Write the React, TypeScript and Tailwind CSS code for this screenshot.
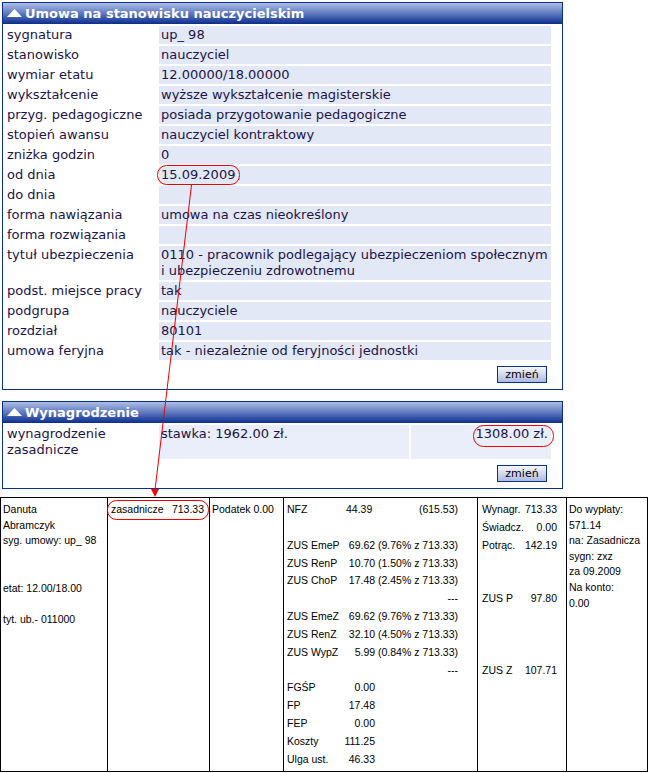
import React from 'react';

type Row = { label: string; value?: string };

const umowaRows: Row[] = [
  { label: 'sygnatura', value: 'up_ 98' },
  { label: 'stanowisko', value: 'nauczyciel' },
  { label: 'wymiar etatu', value: '12.00000/18.00000' },
  { label: 'wykształcenie', value: 'wyższe wykształcenie magisterskie' },
  { label: 'przyg. pedagogiczne', value: 'posiada przygotowanie pedagogiczne' },
  { label: 'stopień awansu', value: 'nauczyciel kontraktowy' },
  { label: 'zniżka godzin', value: '0' },
  { label: 'od dnia', value: '15.09.2009' },
  { label: 'do dnia' },
  { label: 'forma nawiązania', value: 'umowa na czas nieokreślony' },
  { label: 'forma rozwiązania' },
  {
    label: 'tytuł ubezpieczenia',
    value: '0110 - pracownik podlegający ubezpieczeniom społecznym i ubezpieczeniu zdrowotnemu',
  },
  { label: 'podst. miejsce pracy', value: 'tak' },
  { label: 'podgrupa', value: 'nauczyciele' },
  { label: 'rozdział', value: '80101' },
  { label: 'umowa feryjna', value: 'tak - niezależnie od feryjności jednostki' },
];

function PanelHeader({ title }: { title: string }) {
  return (
    <div className="h-[21px] flex items-center gap-[3px] pl-[4px] bg-gradient-to-b from-[#b0bee6] via-[#5f78c0] to-[#0b2c8c] text-white font-bold text-[13px] leading-none">
      <svg width="15" height="8" viewBox="0 0 15 8" className="mb-[1px]">
        <polygon points="0,8 7.5,0 15,8" fill="#ffffff" />
      </svg>
      <span>{title}</span>
    </div>
  );
}

function ZmienButton() {
  return (
    <button className="w-[50px] h-[17px] border border-[#0b2d8c] bg-gradient-to-b from-[#f6f7fc] to-[#aeb9de] text-[11px] leading-none text-black flex items-center justify-center">
      zmień
    </button>
  );
}

function Zus({ label, value }: { label: string; value: string }) {
  return (
    <div className="flex justify-between w-[171px]">
      <span>{label}</span>
      <span>{value}</span>
    </div>
  );
}

function Fund({ label, value }: { label: string; value: string }) {
  return (
    <div className="flex justify-between w-[88px]">
      <span>{label}</span>
      <span>{value}</span>
    </div>
  );
}

function Sum({ label, value }: { label: string; value: string }) {
  return (
    <div className="flex justify-between">
      <span>{label}</span>
      <span>{value}</span>
    </div>
  );
}

export default function App() {
  return (
    <div
      className="relative w-[649px] h-[773px] bg-white overflow-hidden"
      style={{ fontFamily: '"DejaVu Sans", Verdana, sans-serif' }}
    >
      <div className="pt-[2px] pl-[2px] flex flex-col">
        {/* Umowa */}
        <div className="w-[561px] border border-[#0b2d8c] bg-white">
          <PanelHeader title="Umowa na stanowisku nauczycielskim" />
          <div className="pt-[2px] pl-[2px] flex flex-col gap-[2px] text-[13px] leading-[16px] text-[#1b1448]">
            {umowaRows.map((r) => (
              <div key={r.label} className="flex">
                <div className="w-[154px] px-[2px] py-[1px]">{r.label}</div>
                <div className="w-[392px] px-[2px] py-[1px] bg-[#e3e8f6]">{r.value ?? '\u00a0'}</div>
              </div>
            ))}
          </div>
          <div className="flex justify-end pr-[15px] pt-[6px] pb-[6px]">
            <ZmienButton />
          </div>
        </div>

        {/* Wynagrodzenie */}
        <div className="mt-[11px] w-[561px] border border-[#0b2d8c] bg-white">
          <PanelHeader title="Wynagrodzenie" />
          <div className="pt-[2px] pl-[2px] flex text-[13px] leading-[16px] text-[#1b1448]">
            <div className="w-[154px] px-[2px] py-[1px]">
              wynagrodzenie
              <br />
              zasadnicze
            </div>
            <div className="w-[250px] h-[34px] px-[2px] py-[1px] bg-[#e9eefa]">stawka: 1962.00 zł.</div>
            <div className="ml-[2px] w-[140px] h-[34px] px-[3px] py-[1px] bg-[#e9eefa] text-right">1308.00 zł.</div>
          </div>
          <div className="flex justify-end pr-[15px] pt-[6px] pb-[6px]">
            <ZmienButton />
          </div>
        </div>
      </div>

      {/* Pasek wypłaty */}
      <div
        className="mt-[8px] w-[648px] h-[275px] border border-black flex text-[10.5px] text-black"
        style={{ fontFamily: '"Liberation Sans", Arial, sans-serif' }}
      >
        <div className="w-[106px] pl-[2px] pt-[4px] leading-[15.7px]">
          Danuta
          <br />
          Abramczyk
          <br />
          syg. umowy: up_ 98
          <br />
          <br />
          <br />
          etat: 12.00/18.00
          <br />
          <br />
          tyt. ub.- 011000
        </div>
        <div className="w-[102px] border-l border-black pl-[3px] pr-[5px] pt-[4px] leading-[15.7px]">
          <div className="flex justify-between">
            <span>zasadnicze</span>
            <span>713.33</span>
          </div>
        </div>
        <div className="w-[74px] border-l border-black pl-[2px] pt-[4px] leading-[15.7px]">Podatek 0.00</div>
        <div className="w-[194px] border-l border-black pl-[3px] pt-[3px] leading-[17.85px]">
          <div className="flex w-[171px]">
            <span className="w-[59px]">NFZ</span>
            <span>44.39</span>
            <span className="flex-1 text-right">(615.53)</span>
          </div>
          <div>&nbsp;</div>
          <Zus label="ZUS EmeP" value="69.62 (9.76% z 713.33)" />
          <Zus label="ZUS RenP" value="10.70 (1.50% z 713.33)" />
          <Zus label="ZUS ChoP" value="17.48 (2.45% z 713.33)" />
          <div className="w-[171px] text-right">---</div>
          <Zus label="ZUS EmeZ" value="69.62 (9.76% z 713.33)" />
          <Zus label="ZUS RenZ" value="32.10 (4.50% z 713.33)" />
          <Zus label="ZUS WypZ" value="5.99 (0.84% z 713.33)" />
          <div className="w-[171px] text-right">---</div>
          <Fund label="FGŚP" value="0.00" />
          <Fund label="FP" value="17.48" />
          <Fund label="FEP" value="0.00" />
          <Fund label="Koszty" value="111.25" />
          <Fund label="Ulga ust." value="46.33" />
        </div>
        <div className="w-[89px] border-l border-black pl-[4px] pr-[9px] pt-[3px] leading-[17.85px]">
          <Sum label="Wynagr." value="713.33" />
          <Sum label="Świadcz." value="0.00" />
          <Sum label="Potrąc." value="142.19" />
          <div>&nbsp;</div>
          <div>&nbsp;</div>
          <Sum label="ZUS P" value="97.80" />
          <div>&nbsp;</div>
          <div>&nbsp;</div>
          <div>&nbsp;</div>
          <Sum label="ZUS Z" value="107.71" />
        </div>
        <div className="flex-1 border-l border-black pl-[2px] pt-[4px] leading-[15.6px]">
          Do wypłaty:
          <br />
          571.14
          <br />
          na: Zasadnicza
          <br />
          sygn: zxz
          <br />
          za 09.2009
          <br />
          Na konto:
          <br />
          0.00
        </div>
      </div>

      {/* red annotations drawn over the screenshot */}
      <svg
        className="absolute inset-0 pointer-events-none"
        width="649"
        height="773"
        viewBox="0 0 649 773"
      >
        <rect x="157.5" y="165.5" width="82" height="19" rx="9" fill="none" stroke="#ee0000" strokeWidth="1" />
        <rect x="473.5" y="425.5" width="80" height="21" rx="10" fill="none" stroke="#ee0000" strokeWidth="1" />
        <rect x="107.5" y="500.5" width="101" height="19" rx="9" fill="none" stroke="#ee0000" strokeWidth="1" />
        <line x1="191.5" y1="185" x2="155" y2="490" stroke="#ee0000" strokeWidth="1" />
        <polygon points="151,489 159,489 155,497" fill="#ee0000" />
      </svg>
    </div>
  );
}
